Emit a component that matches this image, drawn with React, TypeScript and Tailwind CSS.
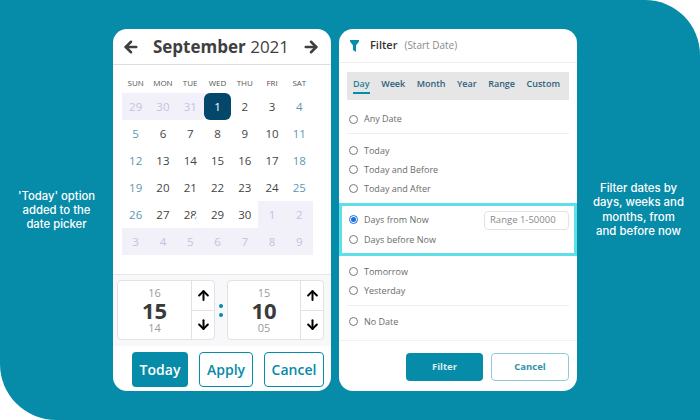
import { ArrowLeft, ArrowRight, ArrowUp, ArrowDown } from "lucide-react";

const weekdays = ["SUN", "MON", "TUE", "WED", "THU", "FRI", "SAT"];
const days = [
  29, 30, 31, 1, 2, 3, 4,
  5, 6, 7, 8, 9, 10, 11,
  12, 13, 14, 15, 16, 17, 18,
  19, 20, 21, 22, 23, 24, 25,
  26, 27, 28, 29, 30, 1, 2,
  3, 4, 5, 6, 7, 8, 9,
];
const tabs = ["Day", "Week", "Month", "Year", "Range", "Custom"];

function DayCell({ n, i }: { n: number; i: number }) {
  const outside = i < 3 || i > 32;
  const weekend = i % 7 === 0 || i % 7 === 6;
  if (i === 3) {
    return (
      <div className="h-[27px] flex items-center justify-center rounded-md bg-[#03486b] text-white text-[11.5px]">{n}</div>
    );
  }
  return (
    <div
      className={`h-[27px] flex items-center justify-center text-[11.5px] ${
        outside ? "bg-[#f2f0f9] text-[#c5c2e2]" : weekend ? "text-[#5d97b3]" : "text-[#444444]"
      }`}
    >
      {n}
    </div>
  );
}

function Spinner({ prev, value, next, width }: { prev: string; value: string; next: string; width: string }) {
  return (
    <div className={`flex h-[60px] bg-white border border-[#e2e2e2] rounded ${width}`}>
      <div className="flex-1 flex flex-col items-center justify-center text-[#9a9a9a] text-[11px] leading-[11px]">
        <span>{prev}</span>
        <span className="text-[#3a3a3a] text-[22px] font-bold leading-[24px]">{value}</span>
        <span>{next}</span>
      </div>
      <div className="w-[23px] flex flex-col border-l border-[#e2e2e2]">
        <div className="flex-1 flex items-center justify-center border-b border-[#e2e2e2]">
          <ArrowUp size={15} strokeWidth={3.2} className="text-black" />
        </div>
        <div className="flex-1 flex items-center justify-center">
          <ArrowDown size={15} strokeWidth={3.2} className="text-black" />
        </div>
      </div>
    </div>
  );
}

function Radio({ label, checked, className }: { label: string; checked?: boolean; className?: string }) {
  return (
    <div className={`flex items-center gap-[6px] h-[19px] pl-[2px] text-[9px] text-[#6b6b6b] ${className ?? ""}`}>
      <span
        className={`w-[9px] h-[9px] rounded-full border flex items-center justify-center bg-white ${
          checked ? "border-[#1a6fe0]" : "border-[#777777]"
        }`}
      >
        {checked && <span className="w-[5px] h-[5px] rounded-full bg-[#1a6fe0]" />}
      </span>
      {label}
    </div>
  );
}

function DatePicker() {
  return (
    <div className="w-[218px] h-[362px] bg-white rounded-[14px] flex flex-col overflow-hidden">
      <div className="h-[35px] flex items-center justify-between pl-[9px] pr-[11px] border-b border-[#dedede] box-content">
        <ArrowLeft size={18} strokeWidth={3.4} className="text-[#3f3f3f]" />
        <div className="text-[17px] text-[#3f3f3f] leading-none">
          <span className="font-bold">September</span> 2021
        </div>
        <ArrowRight size={18} strokeWidth={3.4} className="text-[#3f3f3f]" />
      </div>
      <div className="px-[9px] flex-1">
        <div className="grid grid-cols-7 w-[191px] h-[21px] mt-[7px] items-center text-center text-[8px] text-[#555555]">
          {weekdays.map((w) => (
            <span key={w}>{w}</span>
          ))}
        </div>
        <div className="grid grid-cols-7 w-[191px] relative">
          {days.map((n, i) => (
            <DayCell key={i} n={n} i={i} />
          ))}
          <svg className="absolute left-[70px] top-[117px]" width="10" height="18" viewBox="0 0 10 18">
            <path d="M9 0 L1 9 L9 17" stroke="#ffffff" strokeWidth="2" fill="none" />
            <path d="M3 9 L9 16" stroke="#eeeeee" strokeWidth="0.6" fill="none" />
          </svg>
        </div>
      </div>
      <div className="h-[72px] bg-[#f8f8fb] border-t border-[#e6e6e6] flex items-start pt-[5px] pl-[4px]">
        <Spinner prev="16" value="15" next="14" width="w-[98px]" />
        <div className="w-[12px] h-[60px] flex flex-col items-center justify-center gap-[5px]">
          <span className="w-[4px] h-[4px] rounded-full bg-[#068ba8]" />
          <span className="w-[4px] h-[4px] rounded-full bg-[#068ba8]" />
        </div>
        <Spinner prev="15" value="10" next="05" width="w-[97px]" />
      </div>
      <div className="h-[45px] flex items-start justify-end gap-[11px] pr-[7px] pt-[6px] text-[14px] font-semibold">
        <button className="w-[56px] h-[35px] rounded-sm bg-[#068ba8] text-white">Today</button>
        <button className="w-[54px] h-[35px] rounded-sm border border-[#068ba8] text-[#068ba8]">Apply</button>
        <button className="w-[60px] h-[35px] rounded-sm border border-[#068ba8] text-[#068ba8]">Cancel</button>
      </div>
    </div>
  );
}

function FilterPanel() {
  return (
    <div className="w-[238px] h-[362px] bg-white rounded-[14px] flex flex-col overflow-hidden">
      <div className="h-[34px] flex items-center pl-[11px] border-b border-[#eeeeee]">
        <svg width="9" height="12" viewBox="0 0 9 12" className="mr-[11px]">
          <path d="M0 0 H9 V1.5 L6 5.5 V12 L3 10 V5.5 L0 1.5 Z" fill="#068ba8" />
        </svg>
        <span className="text-[11px] font-semibold text-[#333333]">Filter</span>
        <span className="ml-[7px] text-[10px] text-[#8a8a8a]">(Start Date)</span>
      </div>
      <div className="mx-[8px] mt-[9px] h-[28px] bg-[#e6e6e6] flex items-center justify-between pl-[6px] pr-[9px] text-[9px] font-semibold text-[#2f5f7c]">
        {tabs.map((t) => (
          <span
            key={t}
            className={t === "Day" ? "h-[28px] leading-[24px] relative text-[#1d7f9a]" : "h-[28px] leading-[24px]"}
          >
            {t}
            {t === "Day" && <span className="absolute left-0 right-0 top-[20px] h-[1.5px] bg-[#068ba8]" />}
          </span>
        ))}
      </div>
      <div className="mx-[8px] mt-[8px] h-[26px] flex items-center border-b border-[#eeeeee] pb-[3px]">
        <Radio label="Any Date" />
      </div>
      <div className="mx-[8px] mt-[7px]">
        <Radio label="Today" />
        <Radio label="Today and Before" />
        <Radio label="Today and After" />
      </div>
      <div className="mt-[5px] h-[53px] border-[3px] border-[#5fe0e8] px-[5px] flex items-center justify-between">
        <div className="flex flex-col">
          <Radio label="Days from Now" checked className="h-[20px]" />
          <Radio label="Days before Now" className="h-[20px]" />
        </div>
        <div className="w-[85px] h-[19px] mb-[18px] border border-[#e2e2e2] rounded-sm flex items-center pl-[5px] text-[9.5px] text-[#8a8a8a]">
          Range 1-50000
        </div>
      </div>
      <div className="mx-[8px] mt-[6px] pb-[5px] border-b border-[#eeeeee]">
        <Radio label="Tomorrow" />
        <Radio label="Yesterday" />
      </div>
      <div className="mx-[8px] mt-[6px]">
        <Radio label="No Date" />
      </div>
      <div className="mt-[9px] flex-1 border-t border-[#f2f2f2] flex justify-end gap-[8px] pr-[8px] pt-[12px] text-[9.5px] font-bold">
        <button className="w-[77px] h-[28px] rounded-sm bg-[#068ba8] text-[#d8eef3]">Filter</button>
        <button className="w-[78px] h-[28px] rounded-sm border border-[#8fcbd8] text-[#2d93ab]">Cancel</button>
      </div>
    </div>
  );
}

export default function App() {
  return (
    <div className="w-[700px] h-[420px] bg-white overflow-hidden font-['Open_Sans',sans-serif]">
      <div className="w-full h-full bg-[#068ba8] rounded-tr-[55px] rounded-bl-[56px] flex items-start pt-[29px]">
        <div className="w-[113px] pt-[160px] text-center text-white text-[11.3px] leading-[14px] font-['Inter',sans-serif] font-medium">
          'Today' option<br />added to the<br />date picker
        </div>
        <DatePicker />
        <div className="w-[8px]" />
        <FilterPanel />
        <div className="flex-1 pt-[152px] text-center text-white text-[11.4px] leading-[14.4px] font-['Inter',sans-serif] font-medium">
          Filter dates by<br />days, weeks and<br />months, from<br />and before now
        </div>
      </div>
    </div>
  );
}
